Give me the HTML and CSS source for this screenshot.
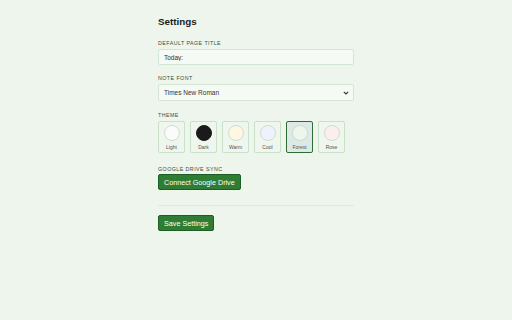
FILE: index.html
```html
<!DOCTYPE html>
<html lang="en">
<head>
    <meta charset="UTF-8">
    <title>Settings</title>
    <link rel="stylesheet" href="styles.css">
</head>
<body>
    <div class="settings">
        <h1>Settings</h1>

        <div class="field">
            <label class="field-label">Default Page Title</label>
            <input class="text-input" type="text" value="Today:">
        </div>

        <div class="field field-font">
            <label class="field-label">Note Font</label>
            <div class="select">
                <span>Times New Roman</span>
                <svg class="chevron" width="6" height="4" viewBox="0 0 6 4"><path d="M0.8 0.8 L3 3 L5.2 0.8" fill="none" stroke="#333" stroke-width="1.1"/></svg>
            </div>
        </div>

        <div class="field field-theme">
            <label class="field-label">Theme</label>
            <div class="themes">
                <div class="theme"><span class="dot light"></span>Light</div>
                <div class="theme"><span class="dot dark"></span>Dark</div>
                <div class="theme"><span class="dot warm"></span>Warm</div>
                <div class="theme"><span class="dot cool"></span>Cool</div>
                <div class="theme active"><span class="dot forest"></span>Forest</div>
                <div class="theme"><span class="dot rose"></span>Rose</div>
            </div>
        </div>

        <div class="field field-sync">
            <label class="field-label">Google Drive Sync</label>
            <button class="btn">Connect Google Drive</button>
        </div>

        <div class="divider"></div>

        <button class="btn">Save Settings</button>
    </div>
</body>
</html>
```

FILE: styles.css
```css
/* page */
body {
    margin: 0;
    background: #edf5ed;
    font-family: "Liberation Sans", Arial, sans-serif;
    color: #1f2a1f;
}

.settings {
    width: 196px;
    margin: 0 auto;
    padding: 16px 0 0 0;
}

h1 {
    font-size: 9.8px;
    line-height: 12px;
    font-weight: bold;
    margin: 0 0 12px 0;
    color: #1a221a;
}

.field {
    margin-bottom: 10px;
}

.field-font {
    margin-bottom: 11px;
}

.field-theme {
    margin-bottom: 13px;
}

.field-label {
    display: block;
    font-size: 5.3px;
    line-height: 7px;
    letter-spacing: 0.45px;
    text-transform: uppercase;
    color: #3a4f3a;
    margin-bottom: 2px;
}

.field-sync .field-label {
    margin-bottom: 1px;
}

.text-input {
    display: block;
    box-sizing: border-box;
    width: 100%;
    height: 16px;
    padding: 0 5px;
    border: 1px solid #d3e5d3;
    border-radius: 2px;
    background: #f5faf5;
    font-family: inherit;
    font-size: 6.5px;
    color: #333;
    outline: none;
}

.select {
    box-sizing: border-box;
    height: 17px;
    padding: 0 4px 0 5px;
    border: 1px solid #d3e5d3;
    border-radius: 2px;
    background: #f5faf5;
    font-size: 6.5px;
    color: #333;
    display: flex;
    align-items: center;
    justify-content: space-between;
}

.themes {
    display: flex;
    gap: 5px;
}

.theme {
    box-sizing: border-box;
    width: 27px;
    height: 32px;
    border: 1px solid #c9e0c9;
    border-radius: 2px;
    background: #eef6ee;
    display: flex;
    flex-direction: column;
    align-items: center;
    padding-top: 3px;
    font-size: 5px;
    color: #555;
}

.theme.active {
    border-color: #2e6b35;
    background: #dceae6;
}

.dot {
    box-sizing: border-box;
    width: 16px;
    height: 16px;
    border-radius: 50%;
    border: 1px solid #d0dcd0;
    margin-bottom: 3px;
}

.dot.light { background: #fbfbfb; }
.dot.dark { background: #1a1a1a; border-color: #1a1a1a; }
.dot.warm { background: #fdf7e4; }
.dot.cool { background: #eef2fa; }
.dot.forest { background: #edf5ed; }
.dot.rose { background: #faeeee; }

.btn {
    display: block;
    height: 16px;
    padding: 0 5px;
    border: 1px solid #1d5e26;
    border-radius: 2px;
    background: #2e7d32;
    color: #fff;
    font-family: inherit;
    font-size: 7.2px;
    cursor: pointer;
}

.divider {
    height: 1px;
    background: #dfeadf;
    margin: 15px 0 9px 0;
}
```
